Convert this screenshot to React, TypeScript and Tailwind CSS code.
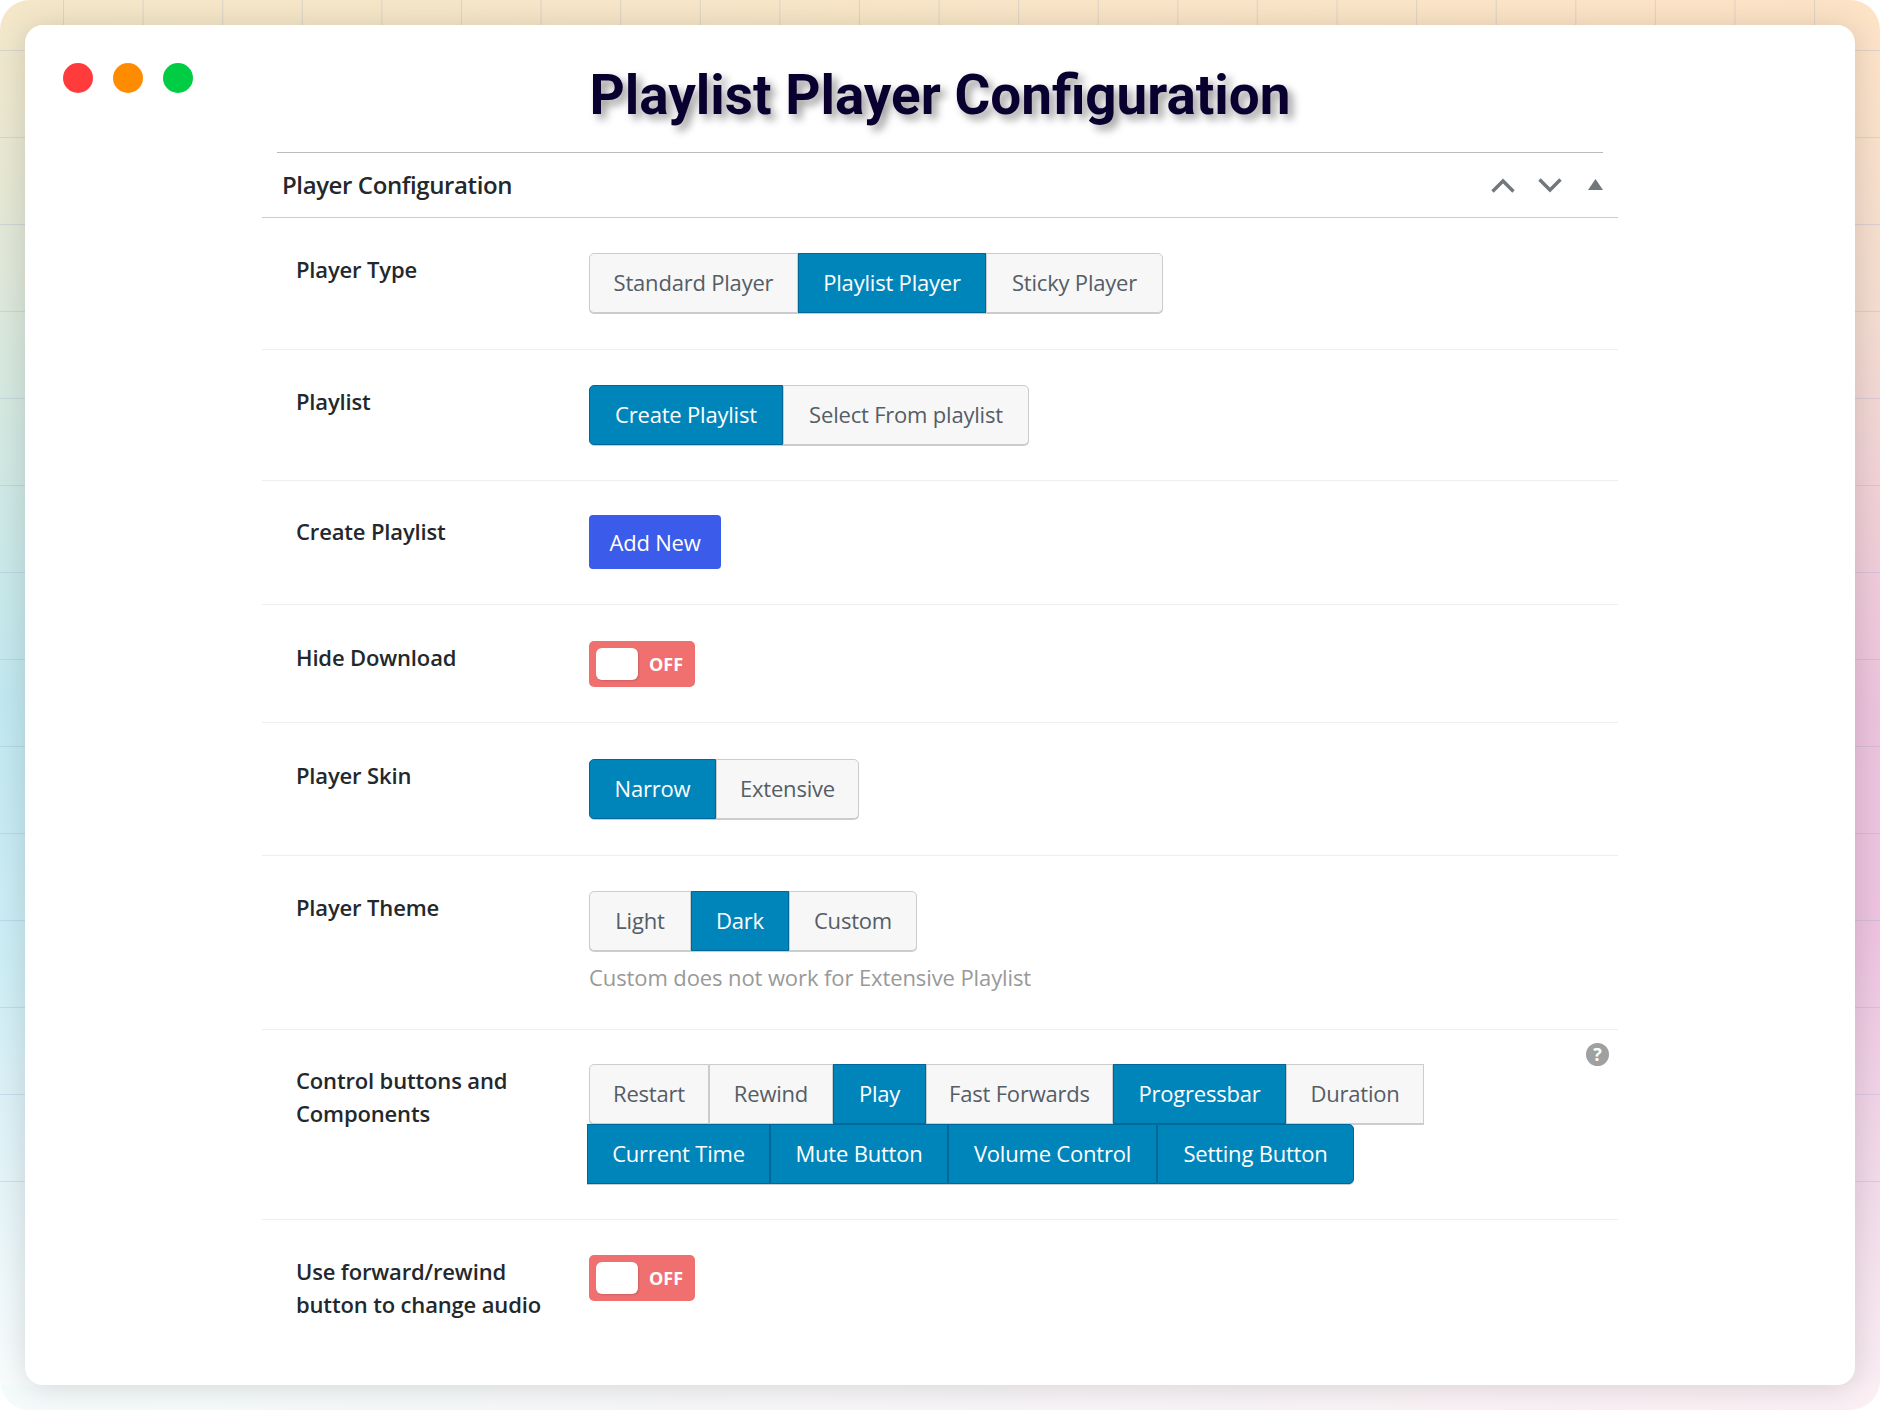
const playerTypes = [
  { label: 'Standard Player', width: 'w-[209px]', active: false },
  { label: 'Playlist Player', width: 'w-[188px]', active: true },
  { label: 'Sticky Player', width: 'w-[177px]', active: false },
];
const playlistModes = [
  { label: 'Create Playlist', width: 'w-[194px]', active: true },
  { label: 'Select From playlist', width: 'w-[246px]', active: false },
];
const skins = [
  { label: 'Narrow', width: 'w-[127px]', active: true },
  { label: 'Extensive', width: 'w-[143px]', active: false },
];
const themes = [
  { label: 'Light', width: 'w-[102px]', active: false },
  { label: 'Dark', width: 'w-[98px]', active: true },
  { label: 'Custom', width: 'w-[128px]', active: false },
];
const controlsTop = [
  { label: 'Restart', width: 'w-[120px]', active: false },
  { label: 'Rewind', width: 'w-[124px]', active: false },
  { label: 'Play', width: 'w-[93px]', active: true },
  { label: 'Fast Forwards', width: 'w-[187px]', active: false },
  { label: 'Progressbar', width: 'w-[173px]', active: true },
  { label: 'Duration', width: 'w-[138px]', active: false },
];
const controlsBottom = [
  { label: 'Current Time', width: 'w-[183px]', active: true },
  { label: 'Mute Button', width: 'w-[178px]', active: true },
  { label: 'Volume Control', width: 'w-[209px]', active: true },
  { label: 'Setting Button', width: 'w-[197px]', active: true },
];

type Segment = { label: string; width: string; active: boolean };

const ButtonGroup = ({ items, rounded = 'both' }: { items: Segment[]; rounded?: 'both' | 'left' | 'right' }) => (
  <div className="flex">
    {items.map((item, i) => {
      const first = i === 0 && rounded !== 'right';
      const last = i === items.length - 1 && rounded !== 'left';
      return (
        <button
          key={item.label}
          className={`${item.width} h-[60px] shrink-0 border pb-px text-[22px] tracking-[-0.2px] shadow-[0_1px_0_#ccc] ${
            item.active ? 'border-[#006799] bg-[#0085ba] text-white' : 'border-[#ccc] bg-[#f7f7f7] text-[#555d66]'
          } ${first ? 'rounded-l-[5px]' : ''} ${last ? 'rounded-r-[5px]' : ''}`}
        >
          {item.label}
        </button>
      );
    })}
  </div>
);

const OffToggle = () => (
  <div className="flex h-[46px] w-[106px] items-center gap-[11px] rounded-[5px] bg-[#f07070] pl-[7px]">
    <div className="h-[32px] w-[42px] rounded-[6px] bg-white shadow-[1px_1px_2px_rgba(0,0,0,0.15)]" />
    <span className="text-[18px] font-bold text-white">OFF</span>
  </div>
);

const Row = ({ label, padding, children, help }: { label: React.ReactNode; padding: string; children: React.ReactNode; help?: boolean }) => (
  <div className={`relative grid grid-cols-[327px_1fr] border-b border-[#eee] ${padding}`}>
    <div className="pl-[34px] text-[22px] leading-[33px] font-semibold tracking-[-0.15px] text-[#23282d]">{label}</div>
    <div>{children}</div>
    {help && (
      <div className="absolute top-[13px] right-[9px] flex h-[23px] w-[23px] items-center justify-center rounded-full bg-[#a0a0a0] text-[18px] font-bold text-white">
        ?
      </div>
    )}
  </div>
);

export default function App() {
  return (
    <div className="h-[1410px] w-[1880px] overflow-hidden bg-white font-['Open_Sans','Noto_Sans',sans-serif]">
      <div className="relative h-full rounded-[30px] p-[25px] [background:linear-gradient(90deg,#f4e7c9,#fde3c6)_top/100%_25px_no-repeat,linear-gradient(90deg,#f4fbfb,#fbeff4)_bottom/100%_25px_no-repeat,linear-gradient(180deg,#f4e7c9_0%,#d8e8de_25%,#c1e8f0_50%,#cdedf5_68%,#e6f4f8_85%,#fbfdfd_100%)_left/50%_100%_no-repeat,linear-gradient(180deg,#fde3c6_0%,#f3dcd0_22%,#ecc3dd_50%,#edc3e0_66%,#f2dcea_85%,#fbeff4_100%)_right/50%_100%_no-repeat]">
        <div className="absolute inset-x-0 top-0 h-[1190px] rounded-t-[30px] bg-[linear-gradient(to_right,rgba(140,160,200,0.25)_1px,transparent_1px),linear-gradient(to_bottom,rgba(140,160,200,0.25)_1px,transparent_1px)] bg-[size:79.6px_87px] bg-[position:63px_50px]" />
        <div className="relative h-full rounded-[18px] bg-white shadow-[0_2px_30px_rgba(0,0,0,0.14)]">
          <div className="grid grid-cols-[1fr_auto_1fr] pt-[38px]">
            <div className="flex gap-[20px] pl-[38px]">
              <span className="h-[30px] w-[30px] rounded-full bg-[#ff3b3b]" />
              <span className="h-[30px] w-[30px] rounded-full bg-[#ff8c00]" />
              <span className="h-[30px] w-[30px] rounded-full bg-[#00cc44]" />
            </div>
            <h1 className="mt-[2px] font-['Roboto',sans-serif] text-[54.8px] leading-[60px] font-bold text-[#0a0030] [text-shadow:5px_5px_8px_rgba(0,0,0,0.4)]">
              Playlist Player Configuration
            </h1>
            <div />
          </div>

          <div className="mx-auto mt-[27px] w-[1356px]">
            <div className="border-b border-[#ccc]">
              <div className="mx-[15px] flex h-[65px] items-center justify-between border-t border-[#bbb] pl-[5px]">
                <h2 className="text-[24px] font-semibold tracking-[-0.4px] text-[#23282d]">Player Configuration</h2>
                <div className="flex items-center gap-[23px] text-[#72777c]">
                  <svg width="24" height="15" viewBox="0 0 24 15" fill="none" stroke="currentColor" strokeWidth="3.4">
                    <path d="M1.5 13.5 12 3l10.5 10.5" />
                  </svg>
                  <svg width="24" height="15" viewBox="0 0 24 15" fill="none" stroke="currentColor" strokeWidth="3.4">
                    <path d="M1.5 1.5 12 12 22.5 1.5" />
                  </svg>
                  <svg className="-mt-[2px] ml-[3px]" width="15" height="11" viewBox="0 0 15 11" fill="currentColor">
                    <path d="M7.5 0 15 11H0z" />
                  </svg>
                </div>
              </div>
            </div>

            <Row label="Player Type" padding="pt-[35px] pb-[36px]">
              <ButtonGroup items={playerTypes} />
            </Row>
            <Row label="Playlist" padding="pt-[35px] pb-[35px]">
              <ButtonGroup items={playlistModes} />
            </Row>
            <Row label="Create Playlist" padding="pt-[34px] pb-[35px]">
              <button className="h-[54px] w-[132px] rounded-[4px] bg-[#3b5bea] text-[22px] tracking-[-0.2px] text-white">Add New</button>
            </Row>
            <Row label="Hide Download" padding="pt-[36px] pb-[35px]">
              <OffToggle />
            </Row>
            <Row label="Player Skin" padding="pt-[36px] pb-[36px]">
              <ButtonGroup items={skins} />
            </Row>
            <Row label="Player Theme" padding="pt-[35px] pb-[34px]">
              <ButtonGroup items={themes} />
              <p className="mt-[8px] text-[22px] leading-[36px] tracking-[-0.1px] text-[#999]">Custom does not work for Extensive Playlist</p>
            </Row>
            <Row
              label={
                <>
                  Control buttons and
                  <br />
                  Components
                </>
              }
              padding="pt-[34px] pb-[35px]"
              help
            >
              <ButtonGroup items={controlsTop} rounded="left" />
              <div className="-ml-[2px]">
                <ButtonGroup items={controlsBottom} rounded="right" />
              </div>
            </Row>
            <div className="grid grid-cols-[327px_1fr] pt-[35px]">
              <div className="pl-[34px] text-[22px] leading-[33px] font-semibold tracking-[-0.15px] text-[#23282d]">
                Use forward/rewind
                <br />
                button to change audio
              </div>
              <OffToggle />
            </div>
          </div>
        </div>
      </div>
    </div>
  );
}
